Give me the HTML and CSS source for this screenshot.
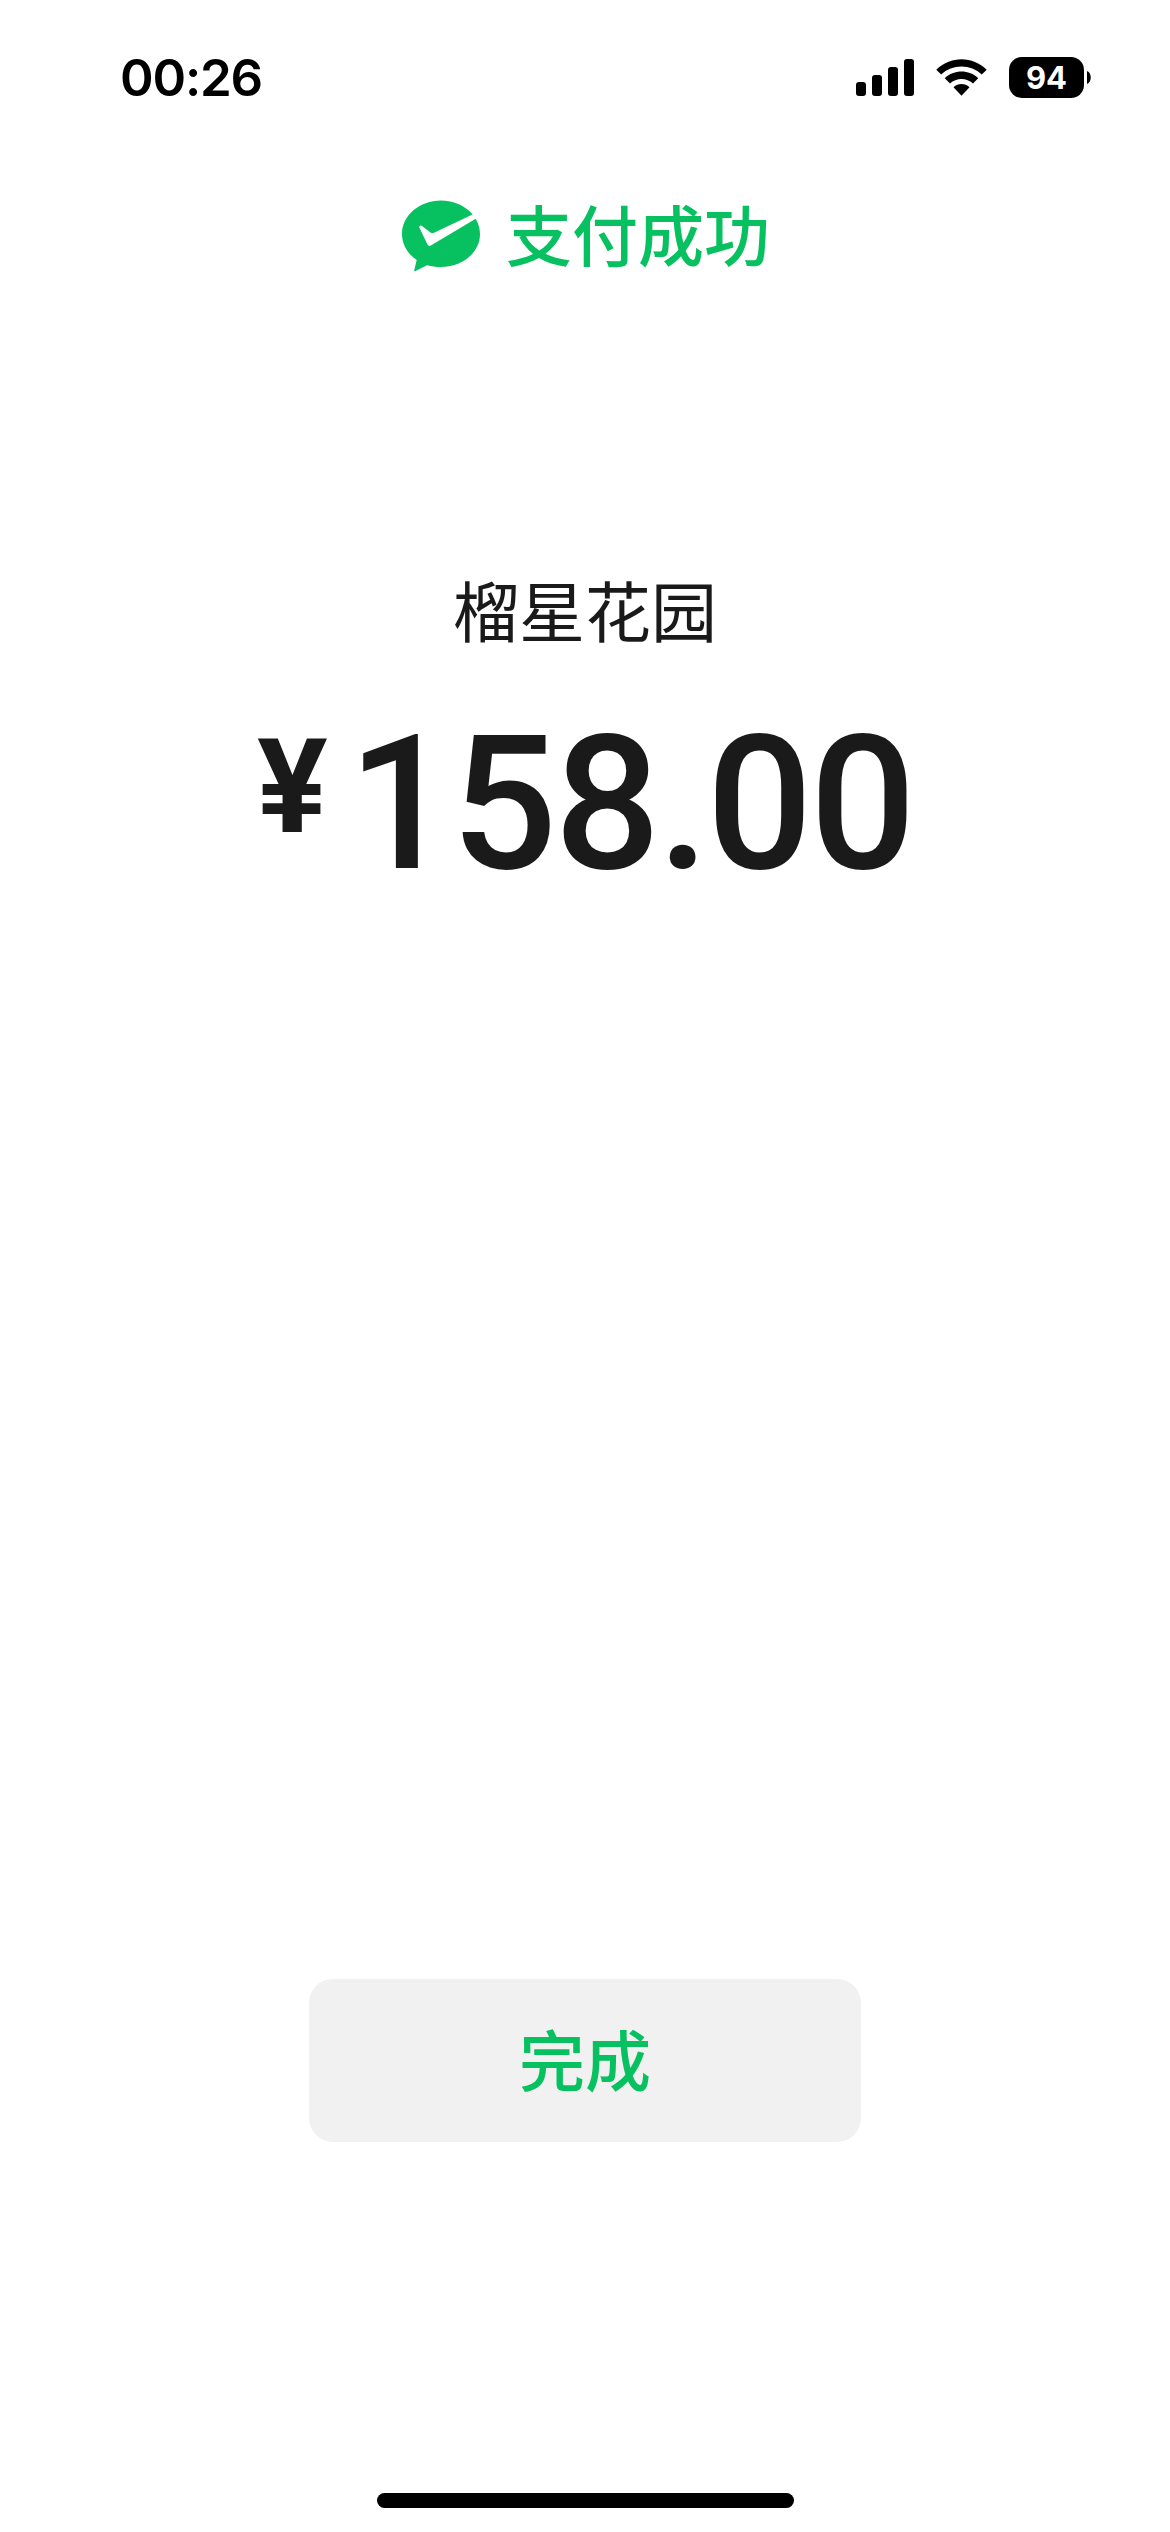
FILE: index.html
```html
<!DOCTYPE html>
<html lang="zh-CN">
<head>
    <meta charset="UTF-8">
    <meta name="viewport" content="width=device-width, initial-scale=1.0">
    <title>支付成功</title>
    <link rel="stylesheet" href="styles.css">
</head>
<body>
    <div class="page">
        <div class="status-bar">
            <span class="time">00:26</span>
            <div class="status-icons">
                <svg class="signal" viewBox="0 0 58 37">
                    <rect x="0" y="23" width="10" height="14" rx="3"/>
                    <rect x="16" y="16" width="10" height="21" rx="3"/>
                    <rect x="32" y="8" width="10" height="29" rx="3"/>
                    <rect x="48" y="0" width="10" height="37" rx="3"/>
                </svg>
                <svg class="wifi" viewBox="0 0 51 37">
                    <path d="M0.3 10.7C14-3.4 37-3.4 50.7 10.7L45.8 15.6C35 4.8 16 4.8 5.2 15.6Z"/>
                    <path d="M8.8 19.2C18 10.3 33 10.3 42.2 19.2L37 24.4C30.8 18.4 20.2 18.4 14 24.4Z"/>
                    <path d="M17.5 28.2C22 24 29 24 33.5 28.2L25.5 36.8Z"/>
                </svg>
                <div class="battery">
                    <span class="battery-level">94</span>
                    <svg class="battery-cap" viewBox="0 0 4 13">
                        <path d="M0 0C5 2 5 11 0 13Z"/>
                    </svg>
                </div>
            </div>
        </div>

        <div class="header">
            <svg class="logo" viewBox="0 0 78 71">
                <path fill="#07c160" d="M39 0.5C60.5 0.5 78 15.5 78 34C78 52.5 60.5 67 39 67C34 67 29.500 66.300 25 65.200L13.500 71C12.600 71.400 12 71 12.300 70L14.700 60C5.800 54 0 44.500 0 34C0 15.500 17.500 0.500 39 0.500Z"/>
                <path fill="#fff" d="M17.5 28C16.8 26 18.3 24.8 20 26L28.5 32.5Q30 33.6 32 32.7L71.500 14L75 18L28.800 45.500Q26.500 46.700 25.500 44.500Z"/>
            </svg>
            <h1>支付成功</h1>
        </div>

        <div class="order">
            <p class="merchant">榴星花园</p>
            <p class="amount"><span class="currency">¥</span><span class="price">158.00</span></p>
        </div>

        <button class="btn">完成</button>

        <div class="home-indicator"></div>
    </div>
</body>
</html>
```

FILE: styles.css
```css
* {
    margin: 0;
    padding: 0;
    box-sizing: border-box;
}

body {
    font-family: "Noto Sans CJK SC", sans-serif;
    background: #fff;
    color: #1a1a1a;
}

.page {
    display: flex;
    flex-direction: column;
    align-items: center;
    height: 2532px;
}

.status-bar {
    display: flex;
    justify-content: space-between;
    width: 100%;
    height: 155px;
    padding: 57px 79px 0 120px;
    color: #000;
    font-family: Inter, sans-serif;
}

.time {
    height: 42px;
    line-height: 42px;
    font-size: 51px;
    font-weight: 600;
    letter-spacing: -1.2px;
}

.status-icons {
    display: flex;
    align-items: center;
    height: 41px;
}

.signal {
    width: 58px;
    height: 37px;
    margin-right: 22px;
}

.wifi {
    width: 51px;
    height: 37px;
    margin-right: 22px;
}

.battery {
    display: flex;
    align-items: center;
}

.battery-level {
    width: 75px;
    height: 41px;
    line-height: 41px;
    border-radius: 13px;
    background: #000;
    color: #fff;
    font-size: 31px;
    font-weight: 700;
    text-align: center;
}

.battery-cap {
    width: 4px;
    height: 13px;
    margin-left: 3px;
}

.header {
    display: flex;
    align-items: center;
    height: 160px;
    gap: 26px;
    padding-left: 2px;
    color: #07c160;
}

.logo {
    width: 78px;
    height: 71px;
}

.header h1 {
    padding-bottom: 6px;
    font-size: 66px;
    font-weight: 500;
    line-height: 96px;
}

.order {
    display: flex;
    flex-direction: column;
    align-items: center;
    height: 1664px;
    padding-top: 245px;
}

.merchant {
    font-size: 66px;
    line-height: 96px;
}

.amount {
    display: flex;
    align-items: flex-start;
    margin-top: 55px;
    font-family: Roboto, sans-serif;
    line-height: 1;
}

.currency {
    margin: 10px 20px 0 0;
    font-size: 132px;
    font-weight: 700;
}

.price {
    font-size: 187px;
    font-weight: 500;
    letter-spacing: -3px;
}

.btn {
    width: 552px;
    height: 163px;
    padding-bottom: 8px;
    border: none;
    border-radius: 24px;
    background: #f1f1f1;
    color: #07c160;
    font-family: inherit;
    font-size: 66px;
    font-weight: 500;
    cursor: pointer;
}

.home-indicator {
    width: 417px;
    height: 15px;
    margin: auto 0 24px;
    border-radius: 8px;
    background: #000;
}
```
